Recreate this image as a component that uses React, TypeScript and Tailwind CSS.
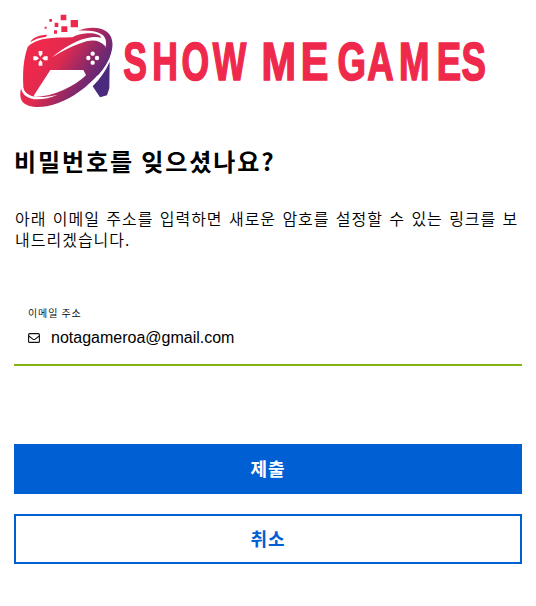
function Logo() {
  return (
    <svg className="block h-[110px] w-[490px]" viewBox="0 0 490 110" role="img" aria-label="Show Me Games">
      <defs>
        <linearGradient id="pad" gradientUnits="userSpaceOnUse" x1="110" y1="100" x2="295" y2="215">
          <stop offset="0" stopColor="#ef294b" />
          <stop offset="0.3" stopColor="#e02a4f" />
          <stop offset="0.7" stopColor="#85286a" />
          <stop offset="1" stopColor="#4a2a80" />
        </linearGradient>
      </defs>
      <g transform="scale(.33333)">
        <g fill="#ef294b">
          <path d="M152 29h17v17h-17zM182 45h22v22h-22zM154 64h18v17h-18zM134 53h11v13h-11zM118 42h8v8h-8zM104 65h6v6h-6zM132 76h9v10h-9z" />
          <path d="M61 112C66 99 82 91 112 89L108 95C87 98 72 103 61 112Z" />
        </g>
        <g fill="url(#pad)">
          <path d="M53 126C66 112 88 103 118 100C142 97 160 98 187 97C198 91 215 86 232 85C252 83 270 88 274 98C250 93 222 98 185 117C163 129 143 142 126 157C157 138 196 119 229 109C251 103 271 106 286 124C288 145 267 178 229 212L220 195H121L72 271L73 276C53 270 38 258 40 243C38 207 39 166 53 126Z" />
          <path d="M205 77C229 67 266 64 287 78C308 91 312 118 303 145C297 168 283 190 264 211L226 212C265 178 294 150 288 112C289 88 262 74 205 77Z" />
          <path d="M303 143C293 181 252 229 207 260C157 297 96 314 56 302C33 295 27 277 33 250C36 264 50 275 73 276C134 274 192 244 229 210C264 170 284 145 290 112Z" />
        </g>
        <path fill="#fff" d="M34 249C36 270 54 283 82 283C102 283 122 278 143 269C122 274 100 277 80 276C58 274 43 265 40 249Z" />
        <path fill="#4a2a7d" d="M299 170L298 250L291 271L270 277L248 244C270 222 287 198 299 170Z" />
        <g fill="#fff">
          <path d="M86 138h11v10l-6 7-5-7zM86 182h11v-10l-6-7-5 7zM70 154h10l7 6-7 6H70zM113 154h-10l-7 6 7 6h10z" />
          <circle cx="248" cy="146" r="6.5" />
          <circle cx="248" cy="173" r="6.5" />
          <circle cx="235" cy="159" r="6.5" />
          <circle cx="261" cy="159" r="6.5" />
        </g>
      </g>
      <g className="font-['Liberation_Sans',Arial,sans-serif] font-bold" fill="#ef294b" stroke="#ef294b" strokeWidth="1.7" fontSize="53.8">
        <text transform="translate(113.2 74.5) scale(.66 1)" x="0 44 88.5 135.5">SHOW</text>
        <text transform="translate(251.4 74.5) scale(.77 1)" x="0 51">ME</text>
        <text transform="translate(327.4 74.5) scale(.68 1)" x="0 44 90.5 146 182.5">GAMES</text>
      </g>
    </svg>
  );
}

function MailIcon() {
  return (
    <svg className="h-[10px] w-3 shrink-0" viewBox="0 0 12 10" fill="none" stroke="#111" strokeWidth="1.1">
      <rect x="0.6" y="0.6" width="10.8" height="8.8" rx="1" />
      <path d="M.8 3L4.8 6.1Q6 6.9 7.2 6.1L11.2 3" />
    </svg>
  );
}

export default function App() {
  return (
    <main className="h-[606px] w-[536px] overflow-hidden bg-white px-[14px] font-['Noto_Sans_CJK_KR',sans-serif] text-black">
      <header className="-ml-1 pt-[5px]">
        <Logo />
      </header>
      <h1 className="mt-[28px] text-[24px] leading-9 font-bold tracking-[1.9px] whitespace-nowrap">비밀번호를 잊으셨나요?</h1>
      <p className="mt-[29px] ml-px text-[16px] leading-[21px] font-[350] tracking-[1px] [word-spacing:1.75px] whitespace-nowrap">
        아래 이메일 주소를 입력하면 새로운 암호를 설정할 수 있는 링크를 보<br />내드리겠습니다.
      </p>
      <form onSubmit={(e) => e.preventDefault()}>
        <div className="mt-[55px] flex h-[61px] flex-col border-b-2 border-[#84b414] px-[14px]">
          <label htmlFor="email" className="text-[10px] leading-4 font-[350] tracking-[0.9px]">이메일 주소</label>
          <div className="mt-[5px] flex items-center gap-[11px]">
            <MailIcon />
            <input
              id="email"
              type="email"
              defaultValue="notagameroa@gmail.com"
              className="h-6 w-full bg-transparent font-['Liberation_Sans',Arial,sans-serif] text-[16px] outline-none"
            />
          </div>
        </div>
        <div className="mt-[78px] flex flex-col gap-5 text-[18px] font-bold">
          <button type="submit" className="h-[50px] bg-[#005fd2] pb-[2px] tracking-[1px] text-white">제출</button>
          <button type="button" className="h-[50px] border-2 border-[#005fd2] bg-white pb-[2px] tracking-[1px] text-[#005fd2]">취소</button>
        </div>
      </form>
    </main>
  );
}
